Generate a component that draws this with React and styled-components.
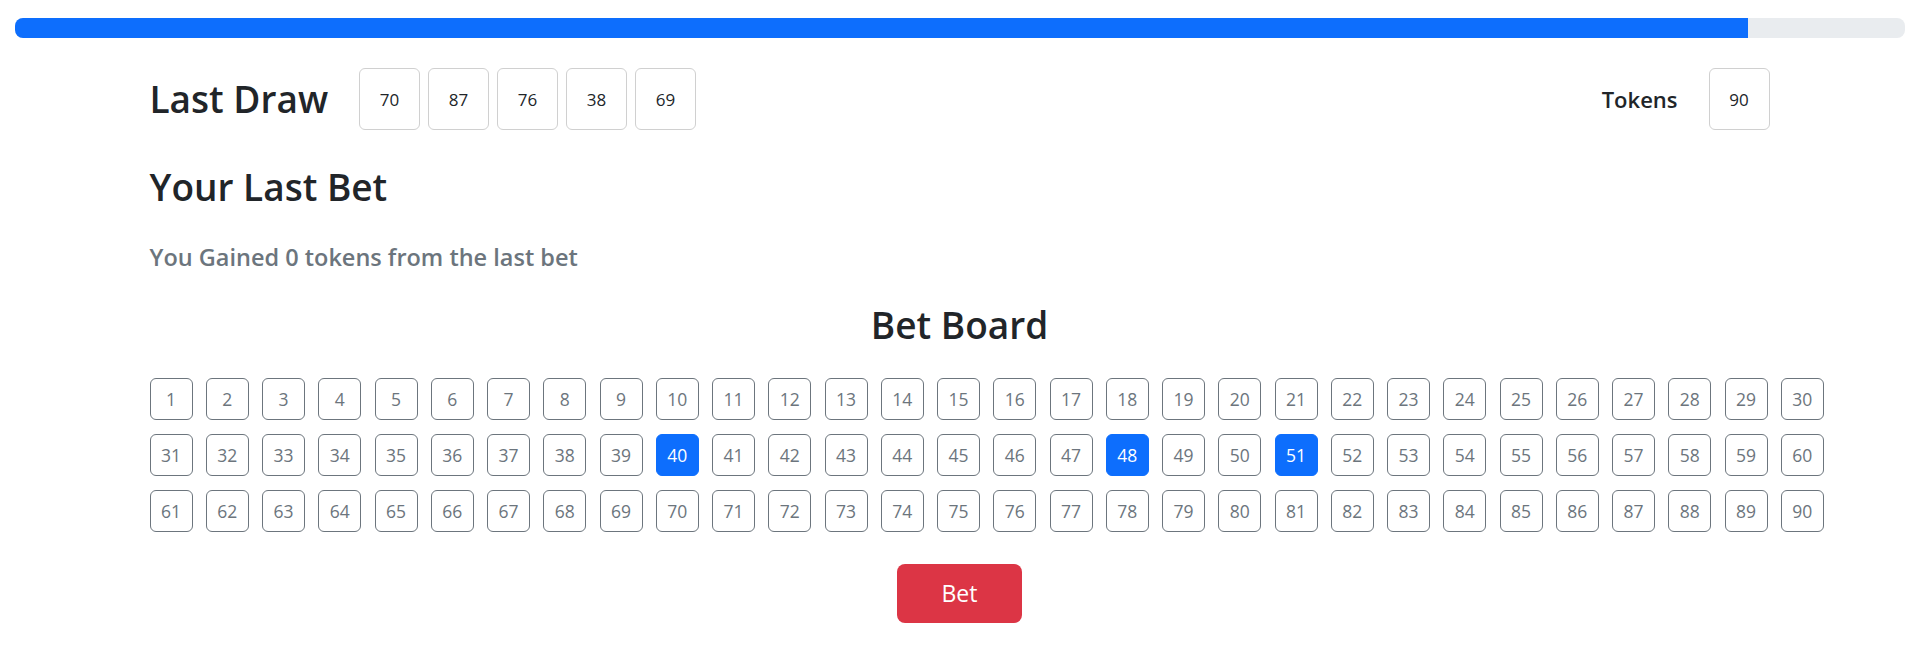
import React from "react";
import styled, { createGlobalStyle } from "styled-components";

const GlobalStyle = createGlobalStyle`
  html, body { margin: 0; padding: 0; background: #fff; }
  body {
    font-family: "Open Sans", "Noto Sans", "Liberation Sans", sans-serif;
    color: #212529;
  }
  * { box-sizing: border-box; }
`;

const Page = styled.div`
  padding-top: 18px;
`;

const ProgressTrack = styled.div`
  height: 20px;
  margin: 0 14px 0 15px;
  background: #e9ecef;
  border-radius: 8px;
  overflow: hidden;
  display: flex;
`;

const ProgressFill = styled.div`
  height: 100%;
  background: #0d6efd;
`;

const Container = styled.div`
  width: 1620px;
  margin: 0 auto;
`;

const TopRow = styled.div`
  margin-top: 30px;
  display: flex;
  align-items: center;
  justify-content: space-between;
`;

const Group = styled.div`
  display: flex;
  align-items: center;
  gap: ${(p) => p.$gap}px;
`;

const BigTitle = styled.h1`
  margin: 0;
  font-size: 37px;
  font-weight: 600;
  line-height: 1.2;
  color: #212529;
`;

const Boxes = styled.div`
  display: flex;
  gap: 8px;
`;

const DrawBox = styled.div`
  width: 61px;
  height: 62px;
  border: 1px solid #d0d0d0;
  border-radius: 6px;
  display: flex;
  align-items: center;
  justify-content: center;
  font-size: 17px;
  color: #212529;
`;

const Label = styled.div`
  font-size: 22px;
  font-weight: 600;
  color: #212529;
`;

const SectionTitle = styled(BigTitle)`
  margin-top: 35px;
`;

const Muted = styled.h5`
  margin: 34px 0 0;
  font-size: 23.5px;
  font-weight: 600;
  line-height: 1.2;
  color: #6c757d;
`;

const BoardTitle = styled(BigTitle)`
  margin-top: 31px;
  text-align: center;
`;

const Board = styled.div`
  margin-top: 31px;
  display: grid;
  grid-template-columns: repeat(30, 43px);
  column-gap: 13.25px;
  row-gap: 14px;
`;

const Cell = styled.button`
  width: 43px;
  height: 42px;
  padding: 0;
  border: 1px solid ${(p) => (p.$active ? "#0d6efd" : "#6c757d")};
  background: ${(p) => (p.$active ? "#0d6efd" : "#fff")};
  color: ${(p) => (p.$active ? "#fff" : "#6c757d")};
  border-radius: 6px;
  font-family: inherit;
  font-size: 17.5px;
  display: flex;
  align-items: center;
  justify-content: center;
  cursor: pointer;
`;

const Actions = styled.div`
  display: flex;
  justify-content: center;
  margin-top: 32px;
`;

const BetButton = styled.button`
  width: 125px;
  height: 59px;
  border: none;
  border-radius: 8px;
  background: #dc3545;
  color: #fff;
  font-family: inherit;
  font-size: 23px;
  cursor: pointer;
`;

const lastDraw = [70, 87, 76, 38, 69];
const selected = new Set([40, 48, 51]);

export default function App() {
  const numbers = Array.from({ length: 90 }, (_, i) => i + 1);
  return (
    <>
      <GlobalStyle />
      <Page>
        <ProgressTrack>
          <ProgressFill style={{ width: "91.7%" }} />
        </ProgressTrack>
        <Container>
          <TopRow>
            <Group $gap={31}>
              <BigTitle>Last Draw</BigTitle>
              <Boxes>
                {lastDraw.map((n, i) => (
                  <DrawBox key={i}>{n}</DrawBox>
                ))}
              </Boxes>
            </Group>
            <Group $gap={31}>
              <Label>Tokens</Label>
              <DrawBox>90</DrawBox>
            </Group>
          </TopRow>
          <SectionTitle>Your Last Bet</SectionTitle>
          <Muted>You Gained 0 tokens from the last bet</Muted>
          <BoardTitle>Bet Board</BoardTitle>
          <Board>
            {numbers.map((n) => (
              <Cell key={n} $active={selected.has(n)}>
                {n}
              </Cell>
            ))}
          </Board>
          <Actions>
            <BetButton>Bet</BetButton>
          </Actions>
        </Container>
      </Page>
    </>
  );
}
